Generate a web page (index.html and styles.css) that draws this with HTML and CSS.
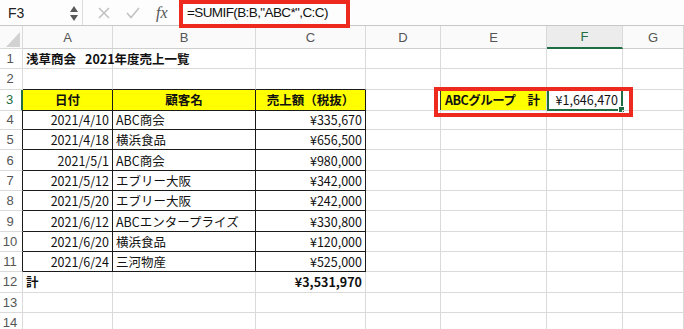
FILE: index.html
```html
<!DOCTYPE html>
<html lang="ja">
<head>
<meta charset="utf-8">
<title>SUMIF</title>
<link rel="stylesheet" href="styles.css">
</head>
<body>
<div class="app">
  <div class="fbar">
    <div class="namebox">
      <span class="ref">F3</span>
      <svg class="stepper" width="10" height="22" viewBox="0 0 10 22"><path d="M1 10 L5 4 L9 10 Z M1 13 L5 19 L9 13 Z" fill="#5a5a5a"/></svg>
    </div>
    <div class="fbtns">
      <svg class="ico-x" width="12" height="12" viewBox="0 0 12 12"><path d="M1 1 L11 11 M11 1 L1 11" stroke="#c2c2c2" stroke-width="1.6" fill="none"/></svg>
      <svg class="ico-chk" width="14" height="12" viewBox="0 0 14 12"><path d="M1 6 L5 10.5 L13 1" stroke="#c2c2c2" stroke-width="1.6" fill="none"/></svg>
      <span class="fx">fx</span>
    </div>
    <div class="formula">=SUMIF(B:B,"ABC*",C:C)</div>
  </div>

  <div class="sheet">
    <div class="row hdr">
      <div class="c corner"><svg width="14" height="15" viewBox="0 0 14 15"><path d="M14 0 L14 15 L0 15 Z" fill="#d2d2d2"/></svg></div>
      <div class="c ch">A</div><div class="c ch">B</div><div class="c ch">C</div><div class="c ch">D</div><div class="c ch">E</div><div class="c ch sel">F</div><div class="c ch">G</div>
    </div>

    <div class="row">
      <div class="c rh">1</div><div class="c b">浅草商会<span class="sp">　</span>2021年度売上一覧</div><div class="c"></div><div class="c"></div><div class="c"></div><div class="c"></div><div class="c"></div><div class="c"></div>
    </div>
    <div class="row">
      <div class="c rh">2</div><div class="c bb"></div><div class="c bb"></div><div class="c bb"></div><div class="c"></div><div class="c"></div><div class="c"></div><div class="c"></div>
    </div>
    <div class="row">
      <div class="c rh rsel">3</div><div class="c k y b ctr">日付</div><div class="c k y b ctr">顧客名</div><div class="c k y b ctr">売上額（税抜）</div><div class="c dk"></div><div class="c y b tight">ABCグループ　計</div><div class="c r active">¥1,646,470<span class="handle"></span></div><div class="c"></div>
    </div>
    <div class="row">
      <div class="c rh kl">4</div><div class="c k r">2021/4/10</div><div class="c k">ABC商会</div><div class="c k r">¥335,670</div><div class="c"></div><div class="c"></div><div class="c"></div><div class="c"></div>
    </div>
    <div class="row">
      <div class="c rh kl">5</div><div class="c k r">2021/4/18</div><div class="c k">横浜食品</div><div class="c k r">¥656,500</div><div class="c"></div><div class="c"></div><div class="c"></div><div class="c"></div>
    </div>
    <div class="row">
      <div class="c rh kl">6</div><div class="c k r">2021/5/1</div><div class="c k">ABC商会</div><div class="c k r">¥980,000</div><div class="c"></div><div class="c"></div><div class="c"></div><div class="c"></div>
    </div>
    <div class="row">
      <div class="c rh kl">7</div><div class="c k r">2021/5/12</div><div class="c k">エブリー大阪</div><div class="c k r">¥342,000</div><div class="c"></div><div class="c"></div><div class="c"></div><div class="c"></div>
    </div>
    <div class="row">
      <div class="c rh kl">8</div><div class="c k r">2021/5/20</div><div class="c k">エブリー大阪</div><div class="c k r">¥242,000</div><div class="c"></div><div class="c"></div><div class="c"></div><div class="c"></div>
    </div>
    <div class="row">
      <div class="c rh kl">9</div><div class="c k r">2021/6/12</div><div class="c k">ABCエンタープライズ</div><div class="c k r">¥330,800</div><div class="c"></div><div class="c"></div><div class="c"></div><div class="c"></div>
    </div>
    <div class="row">
      <div class="c rh kl">10</div><div class="c k r">2021/6/20</div><div class="c k">横浜食品</div><div class="c k r">¥120,000</div><div class="c"></div><div class="c"></div><div class="c"></div><div class="c"></div>
    </div>
    <div class="row">
      <div class="c rh kl">11</div><div class="c k r">2021/6/24</div><div class="c k">三河物産</div><div class="c k r">¥525,000</div><div class="c"></div><div class="c"></div><div class="c"></div><div class="c"></div>
    </div>
    <div class="row">
      <div class="c rh">12</div><div class="c b">計</div><div class="c"></div><div class="c r b">¥3,531,970</div><div class="c"></div><div class="c"></div><div class="c"></div><div class="c"></div>
    </div>
    <div class="row">
      <div class="c rh">13</div><div class="c"></div><div class="c"></div><div class="c"></div><div class="c"></div><div class="c"></div><div class="c"></div><div class="c"></div>
    </div>
    <div class="row">
      <div class="c rh">14</div><div class="c"></div><div class="c"></div><div class="c"></div><div class="c"></div><div class="c"></div><div class="c"></div><div class="c"></div>
    </div>
  </div>

  <div class="mark mark-formula"></div>
  <div class="mark mark-cells"></div>
</div>
</body>
</html>
```

FILE: styles.css
```css
html, body {
  margin: 0;
  padding: 0;
  background: #ffffff;
}

.app {
  position: relative;
  width: 684px;
  height: 329px;
  overflow: hidden;
  font-family: "Noto Sans CJK JP", sans-serif;
  color: #111;
}

/* formula bar */
.fbar {
  display: flex;
  height: 25px;
  background: #fdfdfd;
  border-bottom: 1px solid #c8c8c8;
  box-sizing: content-box;
}

.namebox {
  width: 83px;
  box-sizing: border-box;
  border-right: 1px solid #dcdcdc;
  display: flex;
  align-items: center;
  justify-content: space-between;
  padding: 0 3px 0 8px;
}

.ref {
  font: 14px "Liberation Sans", Arial, sans-serif;
  color: #222;
}

.fbtns {
  width: 96px;
  display: flex;
  align-items: center;
  padding-left: 15px;
  box-sizing: border-box;
}

.ico-x { margin-right: 16px; }
.ico-chk { margin-right: 16px; }

.fx {
  font: italic 16px "Liberation Serif", serif;
  color: #555;
  line-height: 25px;
}

.formula {
  padding-left: 8px;
  font: 13.5px "Liberation Sans", Arial, sans-serif;
  letter-spacing: -0.6px;
  color: #111;
  line-height: 25px;
}

/* sheet */
.sheet {
  display: flex;
  flex-direction: column;
}

.row {
  display: grid;
  grid-template-columns: 23px 90px 143px 110px 75px 106px 76px 1fr;
  height: 20.3px;
}

.row.hdr {
  height: 23px;
  background: #fafafa;
}

.c {
  box-sizing: border-box;
  border-right: 1px solid #dadada;
  border-bottom: 1px solid #dadada;
  display: flex;
  align-items: center;
  padding: 0 3px;
  font-size: 12.5px;
  white-space: nowrap;
  position: relative;
  min-width: 0;
}

.sp { font-size: 9px; }

.tight {
  letter-spacing: -0.5px;
  padding-left: 4px;
}

.corner {
  justify-content: flex-end;
  align-items: flex-end;
  padding: 0 2px 1px 0;
}

.ch {
  justify-content: center;
  font: 13px "Liberation Sans", Arial, sans-serif;
  color: #555;
  border-bottom-color: #cfcfcf;
}

.ch.sel {
  color: #1f6e43;
  background: #ececec;
  border-bottom: 2px solid #1f6e43;
}

.rh {
  justify-content: center;
  font: 13px "Liberation Sans", Arial, sans-serif;
  color: #555;
  padding: 0 2px 0 0;
}

.rh.rsel {
  color: #1f6e43;
  border-right: 2px solid #1f6e43;
}

.rh.kl { border-right-color: #1a1a1a; }

.b { font-weight: bold; }
.r { justify-content: flex-end; }
.ctr { justify-content: center; }
.y { background: #ffff00; }

.k {
  border-right-color: #1a1a1a;
  border-bottom-color: #1a1a1a;
}

.bb { border-bottom-color: #1a1a1a; }
.dk { border-right-color: #333; }

.active {
  border: 2px solid #1f6e43;
  border-top-width: 1px;
  margin-top: -1px;
}

.handle {
  position: absolute;
  right: -4px;
  bottom: -4px;
  width: 5px;
  height: 5px;
  background: #1f6e43;
  border: 1px solid #fff;
}

/* annotations */
.mark {
  position: absolute;
  border: 4px solid #ee2a1e;
  box-sizing: border-box;
  pointer-events: none;
}

.mark-formula {
  left: 179px;
  top: 0;
  width: 171px;
  height: 28px;
}

.mark-cells {
  left: 434px;
  top: 87px;
  width: 199px;
  height: 30px;
}
```
